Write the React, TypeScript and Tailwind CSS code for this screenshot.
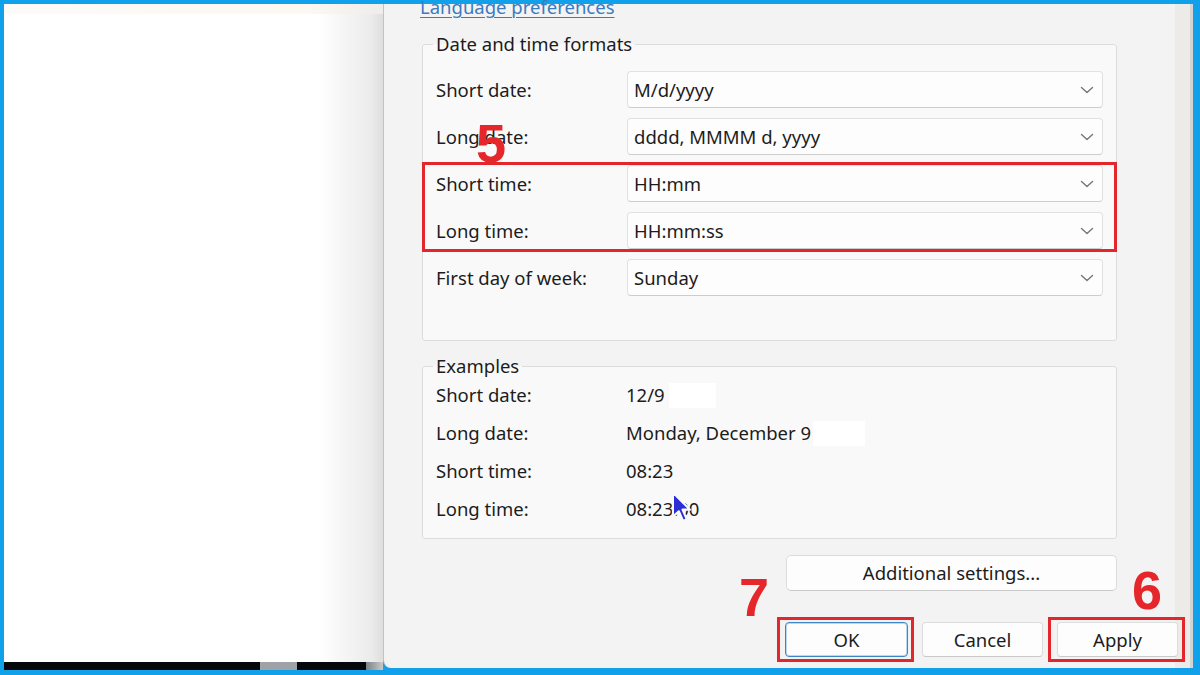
import React from "react";

const Chevron = () => (
  <svg width="14" height="8" viewBox="0 0 14 8" fill="none">
    <path d="M1.5 1.5l5.5 5 5.5-5" stroke="#767676" strokeWidth="1.4" strokeLinecap="round" strokeLinejoin="round" />
  </svg>
);

function Select({ value }: { value: string }) {
  return (
    <div className="flex h-[37px] flex-1 items-center justify-between rounded-[4px] border border-[#e1e1e1] border-b-[#cdcdcd] bg-[#fdfdfd] pl-[6px] pr-[8px]">
      <span>{value}</span>
      <Chevron />
    </div>
  );
}

function FormatRow({ label, value }: { label: string; value: string }) {
  return (
    <div className="flex h-[37px] items-center">
      <span className="w-[191px] shrink-0">{label}</span>
      <Select value={value} />
    </div>
  );
}

function ExampleRow({ label, children }: { label: string; children: React.ReactNode }) {
  return (
    <div className="flex h-[38px] items-center">
      <span className="w-[190px] shrink-0">{label}</span>
      <span className="relative flex items-center">{children}</span>
    </div>
  );
}

const Marker = ({ n, className }: { n: string; className: string }) => (
  <span
    className={`pointer-events-none absolute font-['Liberation_Sans',Arial,sans-serif] text-[54px] font-bold leading-none text-[#e5262a] ${className}`}
  >
    {n}
  </span>
);

function Button({ label, primary }: { label: string; primary?: boolean }) {
  return (
    <button
      className={`flex h-[35px] items-center justify-center rounded-[4px] border bg-[#fdfdfd] ${
        primary
          ? "w-[123px] border-[#3d86c6] shadow-[inset_0_0_0_1px_#bcd6ec]"
          : "w-[121px] border-[#dcdcdc] border-b-[#c9c9c9]"
      }`}
    >
      {label}
    </button>
  );
}

const Cursor = () => (
  <svg
    className="pointer-events-none absolute left-[45px] -top-[4px] blur-[0.4px]"
    width="22"
    height="32"
    viewBox="0 0 20 30"
  >
    <path
      d="M1.5 1.5 L1.5 24 L7 19 L11 28 L14.5 26.5 L10.5 17.5 L17.5 17.5 Z"
      fill="#2a2ed4"
      stroke="#f9f9f9"
      strokeWidth="2"
      strokeLinejoin="round"
    />
  </svg>
);

export default function App() {
  return (
    <div className="flex h-[675px] w-[1200px] items-start overflow-hidden bg-[#11a0ea] pb-[5px] pl-[4px] pr-[7px] pt-[4px] font-['Noto_Sans','Open_Sans',sans-serif] text-[18.5px] text-[#1c1c1c]">
      {/* desktop behind the dialog, with the taskbar edge at the bottom */}
      <div className="flex h-[666px] w-[379px] shrink-0 flex-col bg-[linear-gradient(to_right,#ffffff_0%,#ffffff_83%,#ebebeb_97%,#dedede_100%)]">
        <div className="h-[10px] bg-[linear-gradient(to_right,#fdfbf8_0%,#fcf8f2_80%,#efedea_100%)]" />
        <div className="flex-1" />
        <div className="flex h-[8px]">
          <div className="w-[256px] bg-[#06070b]" />
          <div className="w-[37px] bg-[#9ea3a8]" />
          <div className="w-[69px] bg-[#06070b]" />
          <div className="flex-1 bg-[linear-gradient(to_right,#7d8388,#c9c9c9)]" />
        </div>
      </div>

      {/* Region settings dialog */}
      <div className="relative flex h-[664px] flex-1 flex-col rounded-bl-[8px] border-l border-r-[3px] border-l-[#c2c2c2] border-r-[#d4d4d4] bg-[linear-gradient(to_right,#f3f3f3_calc(100%-15px),#ecebe8_calc(100%-15px))]">
        <div className="flex w-[733px] flex-col pl-[38px]">
          <a className="-ml-[2px] -mt-[9px] block w-fit leading-[24px] text-[#3b7bc0] underline decoration-1 underline-offset-[3px]">
            Language preferences
          </a>

          <fieldset className="mt-[15px] rounded-[3px] border border-[#dcdcdc] bg-[#f9f9f9] px-[13px] pb-[44px] pt-[17px]">
            <legend className="-ml-[3px] px-[3px] leading-[20px]">Date and time formats</legend>
            <div className="relative flex flex-col gap-[10px]">
              <FormatRow label="Short date:" value="M/d/yyyy" />
              <FormatRow label="Long date:" value="dddd, MMMM d, yyyy" />
              <div className="relative flex flex-col gap-[10px]">
                <FormatRow label="Short time:" value="HH:mm" />
                <FormatRow label="Long time:" value="HH:mm:ss" />
                <div className="pointer-events-none absolute -bottom-[3px] -left-[14px] -right-[14px] -top-[3px] border-[3px] border-[#e3262c]" />
              </div>
              <FormatRow label="First day of week:" value="Sunday" />
              <Marker n="5" className="left-[40px] top-[45px]" />
            </div>
          </fieldset>

          <fieldset className="mt-[15px] rounded-[3px] border border-[#dcdcdc] bg-[#f9f9f9] px-[13px] pb-[10px]">
            <legend className="-ml-[3px] px-[3px] leading-[20px]">Examples</legend>
            <ExampleRow label="Short date:">
              12/9<span className="ml-[4px] inline-block h-[25px] w-[47px] bg-white" />
            </ExampleRow>
            <ExampleRow label="Long date:">
              Monday, December 9<span className="ml-[2px] inline-block h-[25px] w-[52px] bg-white" />
            </ExampleRow>
            <ExampleRow label="Short time:">08:23</ExampleRow>
            <ExampleRow label="Long time:">
              08:23:00
              <Cursor />
            </ExampleRow>
          </fieldset>

          <div className="mt-[16px] flex justify-end">
            <button className="flex h-[36px] w-[331px] items-center justify-center rounded-[5px] border border-[#dcdcdc] border-b-[#c9c9c9] bg-[#fdfdfd]">
              Additional settings...
            </button>
          </div>
        </div>

        <div className="mt-[31px] flex justify-end gap-[14px] pr-[12px]">
          <div className="relative">
            <Button label="OK" primary />
            <div className="pointer-events-none absolute -bottom-[5px] -left-[8px] -right-[6px] -top-[5px] border-[3px] border-[#e3262c]" />
            <Marker n="7" className="-left-[46px] -top-[52px]" />
          </div>
          <Button label="Cancel" />
          <div className="relative">
            <Button label="Apply" />
            <div className="pointer-events-none absolute -bottom-[5px] -left-[9px] -right-[7px] -top-[5px] border-[3px] border-[#e3262c]" />
            <Marker n="6" className="left-[75px] -top-[59px]" />
          </div>
        </div>
      </div>
    </div>
  );
}
